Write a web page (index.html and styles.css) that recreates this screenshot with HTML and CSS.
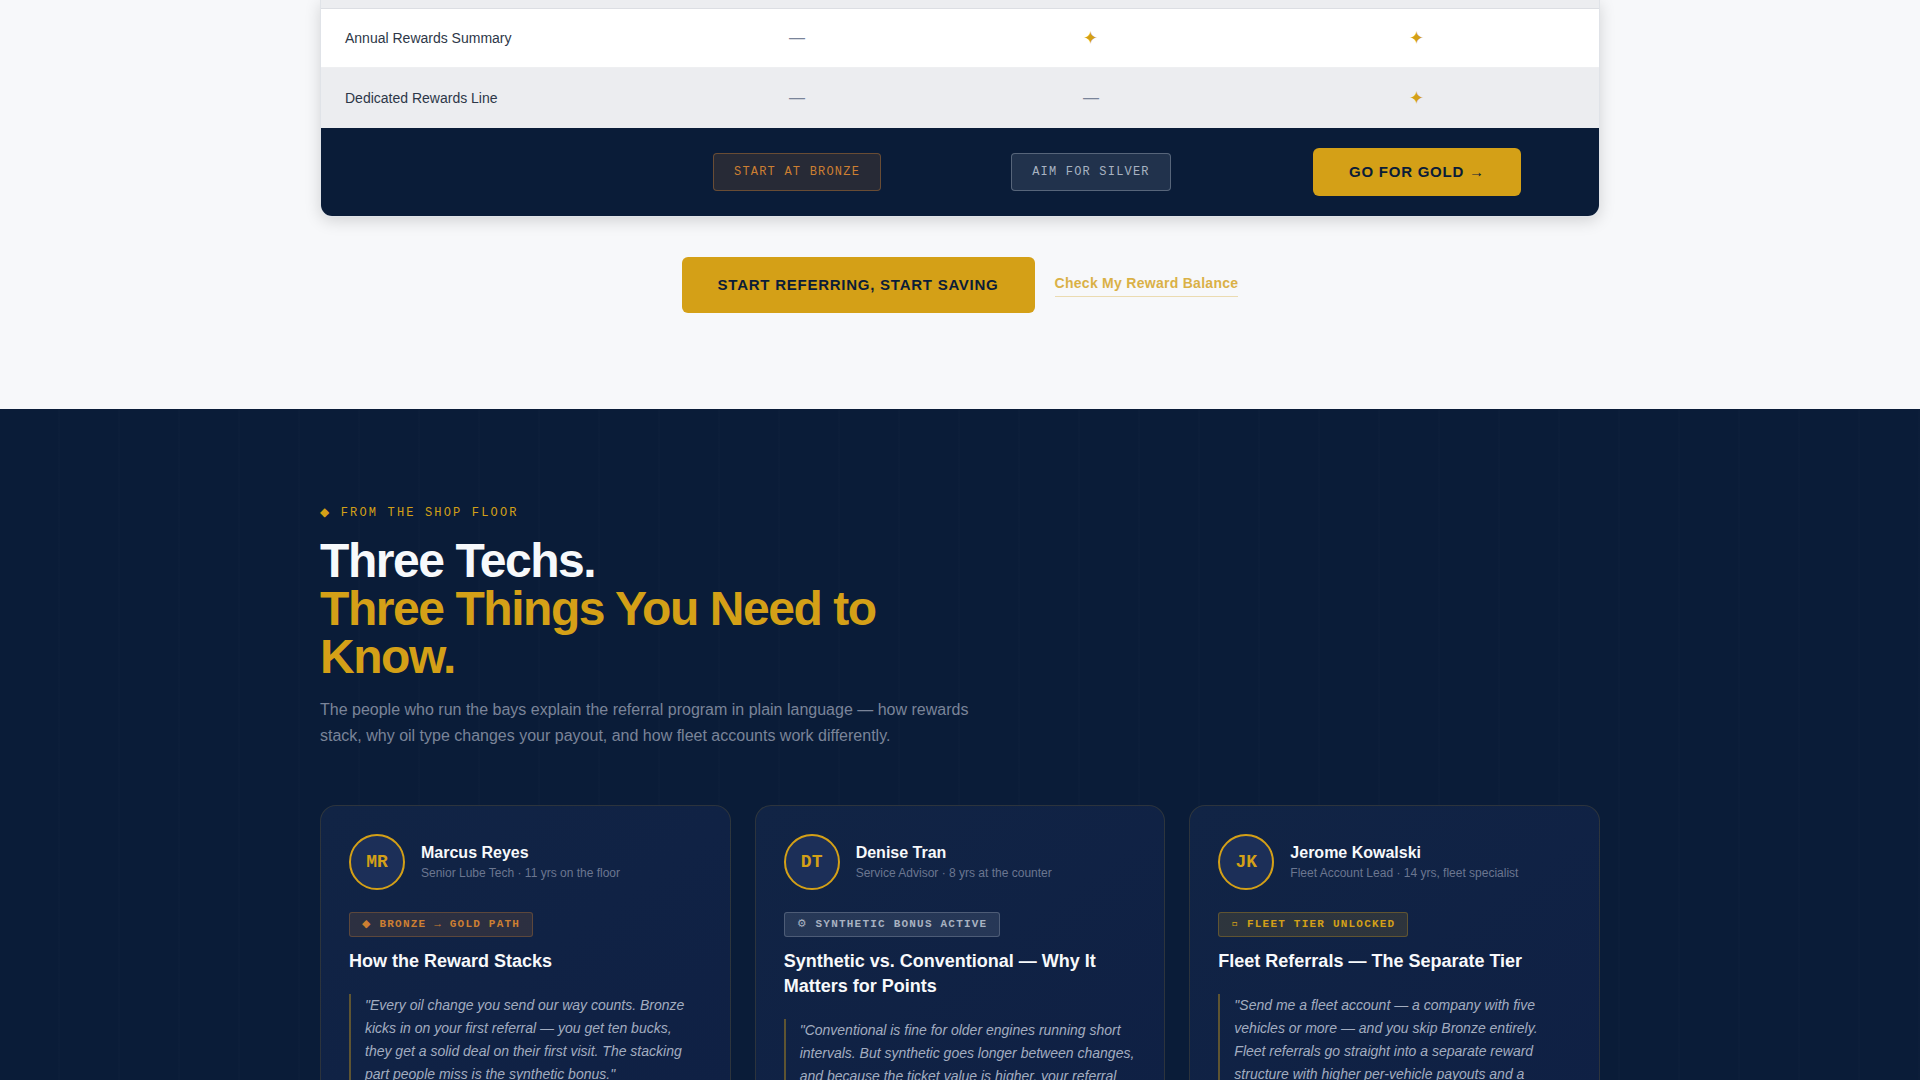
FILE: index.html
```html
<!DOCTYPE html>
<html lang="en">
<head>
	<meta charset="utf-8">
	<meta name="viewport" content="width=device-width, initial-scale=1">
	<title>Referral Rewards</title>
	<link rel="stylesheet" href="styles.css">
</head>
<body>
	<section class="tiers">
		<div class="container">
			<div class="table-card">
				<table class="tier-table">
					<colgroup>
						<col class="col-feature">
						<col class="col-bronze">
						<col class="col-silver">
						<col class="col-gold">
					</colgroup>
					<tbody>
						<tr class="row-spacer"><td></td><td></td><td></td><td></td></tr>
						<tr>
							<td class="feature">Annual Rewards Summary</td>
							<td class="no">—</td>
							<td class="yes">✦</td>
							<td class="yes">✦</td>
						</tr>
						<tr>
							<td class="feature">Dedicated Rewards Line</td>
							<td class="no">—</td>
							<td class="no">—</td>
							<td class="yes">✦</td>
						</tr>
					</tbody>
					<tfoot>
						<tr>
							<td></td>
							<td><button class="btn-tier bronze">START AT BRONZE</button></td>
							<td><button class="btn-tier silver">AIM FOR SILVER</button></td>
							<td><button class="btn-gold small">GO FOR GOLD →</button></td>
						</tr>
					</tfoot>
				</table>
			</div>

			<div class="cta-row">
				<button class="btn-gold">START REFERRING, START SAVING</button>
				<a href="#balance" class="text-link">Check My Reward Balance</a>
			</div>
		</div>
	</section>

	<section class="techs">
		<div class="container">
			<header class="techs-head">
				<p class="eyebrow"><span class="sym">◆</span> FROM THE SHOP FLOOR</p>
				<h2>Three Techs.<br><span>Three Things You Need to Know.</span></h2>
				<p class="lead">The people who run the bays explain the referral program in plain language — how rewards stack, why oil type changes your payout, and how fleet accounts work differently.</p>
			</header>

			<div class="cards">
				<article class="card">
					<div class="person">
						<div class="avatar">MR</div>
						<div>
							<p class="name">Marcus Reyes</p>
							<p class="role">Senior Lube Tech · 11 yrs on the floor</p>
						</div>
					</div>
					<span class="badge bronze"><span class="sym">◆</span> BRONZE → GOLD PATH</span>
					<h3>How the Reward Stacks</h3>
					<blockquote>"Every oil change you send our way counts. Bronze kicks in on your first referral — you get ten bucks, they get a solid deal on their first visit. The stacking part people miss is the synthetic bonus."</blockquote>
				</article>

				<article class="card">
					<div class="person">
						<div class="avatar">DT</div>
						<div>
							<p class="name">Denise Tran</p>
							<p class="role">Service Advisor · 8 yrs at the counter</p>
						</div>
					</div>
					<span class="badge silver"><span class="sym">⚙</span> SYNTHETIC BONUS ACTIVE</span>
					<h3>Synthetic vs. Conventional — Why It Matters for Points</h3>
					<blockquote>"Conventional is fine for older engines running short intervals. But synthetic goes longer between changes, and because the ticket value is higher, your referral</blockquote>
				</article>

				<article class="card">
					<div class="person">
						<div class="avatar">JK</div>
						<div>
							<p class="name">Jerome Kowalski</p>
							<p class="role">Fleet Account Lead · 14 yrs, fleet specialist</p>
						</div>
					</div>
					<span class="badge gold"><span class="sym mono">▫</span> FLEET TIER UNLOCKED</span>
					<h3>Fleet Referrals — The Separate Tier</h3>
					<blockquote>"Send me a fleet account — a company with five vehicles or more — and you skip Bronze entirely. Fleet referrals go straight into a separate reward structure with higher per-vehicle payouts and a</blockquote>
				</article>
			</div>
		</div>
	</section>
</body>
</html>
```
FILE: styles.css
```css
:root {
	--navy: #0a1c38;
	--gold: #d4a017;
	--bronze: #cd7f32;
	--silver: #a8b2c1;
	--mono: "Liberation Mono", "Courier New", monospace;
}

* {
	box-sizing: border-box;
	margin: 0;
	padding: 0;
}

body {
	height: 100vh;
	overflow: hidden;
	background: #f7f8fa;
	color: #2d3748;
	font-family: "Liberation Sans", Arial, sans-serif;
	line-height: 1.6;
}

.container {
	max-width: 1280px;
	margin: 0 auto;
}

/* tier table */
.tiers {
	padding-bottom: 96px;
}

.table-card {
	border: 1px solid #e0e3e8;
	border-top: 0;
	border-radius: 0 0 12px 12px;
	overflow: hidden;
	box-shadow: 0 4px 16px rgba(0, 0, 0, .15);
}

.tier-table {
	width: 100%;
	border-spacing: 0;
	table-layout: fixed;
	background: #fff;
	text-align: center;
}

.col-feature {
	width: 25.5%;
}

.col-bronze {
	width: 23.5%;
}

.col-silver {
	width: 22.5%;
}

.col-gold {
	width: 28.5%;
}

.tier-table td {
	height: 59px;
	vertical-align: middle;
}

.tier-table tbody td {
	border-bottom: 1px solid rgba(10, 28, 56, .07);
}

.tier-table tbody tr:nth-child(odd) {
	background: #ecedf0;
}

.tier-table tbody tr:last-child td {
	height: 60px;
	border-bottom: 0;
}

.tier-table .row-spacer td {
	height: 9px;
}

.tier-table .feature {
	padding-left: 24px;
	font-size: 14px;
	text-align: left;
}

.no {
	color: #7a8499;
	font-size: 16px;
}

.yes {
	color: var(--gold);
	font-size: 18px;
	line-height: 24px;
}

.tier-table tfoot td {
	height: 88px;
	background: var(--navy);
}

button {
	border: 0;
	cursor: pointer;
}

.btn-tier {
	height: 38px;
	padding: 0 20px;
	border: 1px solid;
	border-radius: 4px;
	font-family: var(--mono);
	font-size: 12px;
	letter-spacing: .1em;
}

.btn-tier.bronze {
	color: var(--bronze);
	background: rgba(205, 127, 50, .15);
	border-color: rgba(205, 127, 50, .4);
}

.btn-tier.silver {
	color: var(--silver);
	background: rgba(168, 178, 193, .15);
	border-color: rgba(168, 178, 193, .4);
}

.btn-gold {
	height: 56px;
	padding: 0 36px 2px;
	border-radius: 6px;
	background: var(--gold);
	color: var(--navy);
	font-family: inherit;
	font-size: 15px;
	font-weight: bold;
	letter-spacing: .05em;
}

.btn-gold.small {
	height: 48px;
}

.cta-row {
	display: flex;
	align-items: center;
	justify-content: center;
	gap: 20px;
	margin-top: 40px;
}

.text-link {
	padding-bottom: 2px;
	border-bottom: 1px solid rgba(212, 160, 23, .4);
	color: var(--gold);
	font-size: 14px;
	font-weight: bold;
	line-height: 21px;
	letter-spacing: .02em;
	text-decoration: none;
	opacity: .8;
}

/* shop floor */
.techs {
	padding: 96px 0;
	background: repeating-linear-gradient(90deg, transparent 0, transparent 58px, rgba(255, 255, 255, .008) 58px, rgba(255, 255, 255, .008) 60px) var(--navy);
}

.techs-head {
	max-width: 680px;
	margin-bottom: 56px;
}

.sym {
	font-family: "DejaVu Sans", sans-serif;
	line-height: 1;
}

.sym.mono {
	font-family: "DejaVu Sans Mono", monospace;
}

.eyebrow {
	margin-bottom: 16px;
	color: var(--gold);
	font-family: var(--mono);
	font-size: 12px;
	line-height: 16px;
	letter-spacing: .18em;
}

h2 {
	margin-bottom: 16px;
	color: #f7f9fb;
	font-size: 48px;
	line-height: 48px;
	letter-spacing: -.03em;
}

h2 span {
	color: var(--gold);
}

.lead {
	color: #7a8499;
	font-size: 16px;
	line-height: 26px;
}

.cards {
	display: grid;
	grid-template-columns: repeat(3, 1fr);
	gap: 24px;
}

.card {
	padding: 28px;
	border: 1px solid rgba(212, 160, 23, .15);
	border-radius: 16px;
	background: linear-gradient(145deg, #112445, #0f2044);
}

.person {
	display: flex;
	align-items: center;
	gap: 16px;
	margin-bottom: 22px;
}

.avatar {
	display: flex;
	align-items: center;
	justify-content: center;
	width: 56px;
	height: 56px;
	border: 2px solid var(--gold);
	border-radius: 50%;
	background: #1c2f58;
	color: var(--gold);
	font-family: var(--mono);
	font-size: 18px;
	font-weight: bold;
}

.name {
	color: #f7f9fb;
	font-size: 16px;
	font-weight: bold;
	line-height: 22px;
}

.role {
	color: #6b7690;
	font-size: 12px;
	line-height: 19px;
}

.badge {
	display: block;
	width: fit-content;
	height: 25px;
	margin-bottom: 12px;
	padding: 0 12px;
	border: 1px solid;
	border-radius: 3px;
	font-family: var(--mono);
	font-size: 11px;
	font-weight: bold;
	line-height: 23px;
	letter-spacing: .11em;
}

.badge.bronze {
	color: var(--bronze);
	background: rgba(205, 127, 50, .15);
	border-color: rgba(205, 127, 50, .3);
}

.badge.silver {
	color: var(--silver);
	background: rgba(168, 178, 193, .15);
	border-color: rgba(168, 178, 193, .3);
}

.badge.gold {
	color: var(--gold);
	background: rgba(212, 160, 23, .15);
	border-color: rgba(212, 160, 23, .3);
}

h3 {
	margin-bottom: 20px;
	color: #f7f9fb;
	font-size: 18px;
	line-height: 25px;
}

blockquote {
	padding-left: 14px;
	border-left: 2px solid rgba(212, 160, 23, .4);
	color: #a3adc0;
	font-size: 14px;
	font-style: italic;
	line-height: 23px;
}
```
